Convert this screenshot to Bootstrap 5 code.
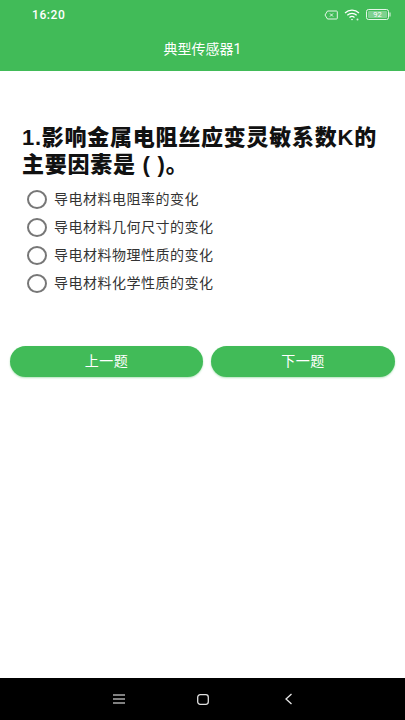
<!DOCTYPE html>
<html lang="zh">
<head>
<meta charset="utf-8">
<meta name="viewport" content="width=device-width, initial-scale=1">
<link href="https://cdn.jsdelivr.net/npm/bootstrap@5.3.0/dist/css/bootstrap.min.css" rel="stylesheet">
<style>
html,body{height:720px;overflow:hidden;background:#fff}
body{font-family:"Roboto","Noto Sans CJK SC",sans-serif;color:#1a1a1a}
.app-shell{height:720px}
.top-head{background:#41bb58;height:71px;color:#fff}
.stat-row{height:29px;padding:0 14px 0 32px}
.stat-time{font-size:12px;font-weight:500;letter-spacing:.6px}
.head-title{font-size:14px;height:42px;padding-bottom:1px}
.quest{font-size:22px;font-weight:900;line-height:27px;letter-spacing:.75px;color:#111;margin:53px 22px 0;font-family:"Liberation Sans","Noto Sans CJK SC",sans-serif}
.opt-list{margin:7px 0 0 27px}
.opt-row{height:28px;font-size:14px;letter-spacing:.5px;color:#333}
.opt-ring{width:20px;height:19px;border:2px solid #777;border-radius:50%;margin-right:7px}
.btn-row{margin:49px 10px 0;gap:8px}
.nav-btn{background:#41bb58;border:0;color:#fff;height:31px;border-radius:16px;font-size:14px;letter-spacing:.5px;padding:0;box-shadow:0 1px 2px rgba(65,187,88,.4)}
.nav-btn:hover{background:#41bb58;color:#fff}
.prev-b{width:193px}
.next-b{width:184px}
.sys-bar{height:42px;background:#000;padding-left:113px}
.home-key{margin-left:72px}
.back-key{margin-left:75px}
.wifi-key{margin-left:6px}
.batt-key{margin-left:6px}
</style>
</head>
<body>
<div class="app-shell d-flex flex-column">
  <header class="top-head">
    <div class="stat-row d-flex align-items-center justify-content-between">
      <span class="stat-time">16:20</span>
      <span class="d-flex align-items-center">
        <svg width="14" height="10" viewBox="0 0 14 10" fill="none" stroke="#e6f6e9" stroke-width="1"><path d="M3.5 1H12.5a.8.8 0 0 1 .8.8V8.200a.8.8 0 0 1-.8.8H3.500L1 5z"/><path d="M6 3.500l3 3M9 3.500l-3 3"/></svg>
        <svg width="16" height="12" viewBox="0 0 16 12" fill="none" stroke="#fff" stroke-width="1.200" class="wifi-key"><path d="M1 4a10 10 0 0 1 14 0M3.300 6.300a6.800 6.800 0 0 1 9.400 0M5.500 8.500a3.600 3.600 0 0 1 5 0"/><circle cx="8" cy="10.500" r=".8" fill="#fff" stroke="none"/><circle cx="13.500" cy="10.500" r="1" fill="#d5f0da" stroke="none"/></svg>
        <svg width="25" height="11" viewBox="0 0 25 11" class="batt-key"><rect x=".5" y=".5" width="22" height="10" rx="2" fill="none" stroke="#e6f6e9"/><rect x="2" y="2" width="19" height="7" rx="1" fill="#7fd190"/><text x="11.500" y="8.200" text-anchor="middle" font-size="7.500" fill="#fff" font-family="Roboto">92</text><rect x="23.500" y="3.500" width="1" height="4" fill="#e6f6e9"/></svg>
      </span>
    </div>
    <div class="head-title d-flex align-items-center justify-content-center">典型传感器1</div>
  </header>
  <main class="flex-grow-1">
    <h1 class="quest">1.影响金属电阻丝应变灵敏系数K的主要因素是 ( )。</h1>
    <div class="opt-list">
      <div class="opt-row d-flex align-items-center"><span class="opt-ring"></span>导电材料电阻率的变化</div>
      <div class="opt-row d-flex align-items-center"><span class="opt-ring"></span>导电材料几何尺寸的变化</div>
      <div class="opt-row d-flex align-items-center"><span class="opt-ring"></span>导电材料物理性质的变化</div>
      <div class="opt-row d-flex align-items-center"><span class="opt-ring"></span>导电材料化学性质的变化</div>
    </div>
    <div class="btn-row d-flex">
      <button class="btn nav-btn prev-b">上一题</button>
      <button class="btn nav-btn next-b">下一题</button>
    </div>
  </main>
  <footer class="sys-bar d-flex align-items-center">
    <svg width="12" height="10" viewBox="0 0 12 10" stroke="#aaa" stroke-width="1.300"><path d="M0 1h12M0 5h12M0 9h12"/></svg>
    <svg class="home-key" width="12" height="11" viewBox="0 0 12 11" fill="none" stroke="#e0e0e0" stroke-width="1.300"><rect x=".7" y=".7" width="10.600" height="9.600" rx="2.500"/></svg>
    <svg class="back-key" width="9" height="12" viewBox="0 0 9 12" fill="none" stroke="#e8e8e8" stroke-width="1.300"><path d="M7.500 1L2 6l5.500 5"/></svg>
  </footer>
</div>
<script src="https://cdn.jsdelivr.net/npm/bootstrap@5.3.0/dist/js/bootstrap.bundle.min.js"></script>
</body>
</html>
